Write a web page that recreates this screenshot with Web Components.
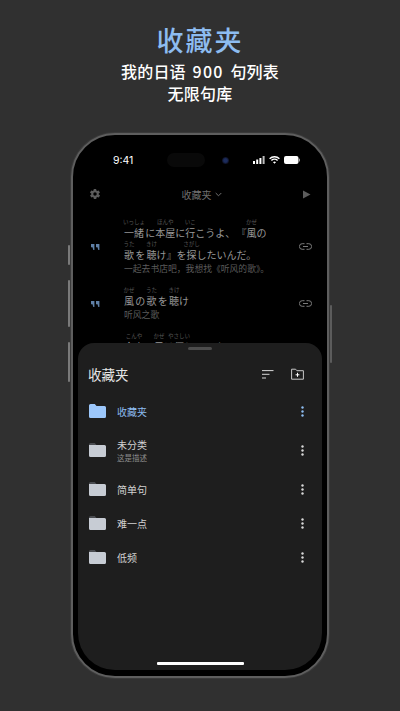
<!doctype html>
<html lang="zh">
  <head>
    <meta charset="UTF-8">
    <title>收藏夹</title>
    <style>
      html, body { margin: 0; height: 711px; overflow: hidden; background: #303030; }
      body { font-family: "Noto Sans CJK SC", "Noto Sans CJK JP", sans-serif; }
    </style>
  </head>
  <body>
    <promo-page>
      <promo-head slot="head"></promo-head>
      <device-frame slot="device">
        <status-bar></status-bar>
        <nav-bar></nav-bar>
        <sentence-list>
          <sentence-row translation="一起去书店吧，我想找《听风的歌》。">
            <jp-word reading="いっしょ">一緒</jp-word> に<jp-word reading="ほんや">本屋</jp-word>に<jp-word reading="いこ">行</jp-word>こうよ、 『<jp-word reading="かぜ">風</jp-word>の<br>
            <jp-word reading="うた">歌</jp-word> を <jp-word reading="きけ">聴</jp-word>け』を<jp-word reading="さがし">探</jp-word>したいんだ。
          </sentence-row>
          <sentence-row translation="听风之歌">
            <jp-word reading="かぜ">風</jp-word> の <jp-word reading="うた">歌</jp-word> を <jp-word reading="きけ">聴</jp-word>け
          </sentence-row>
          <sentence-row translation="今夜的风很温柔">
            <jp-word reading="こんや">今夜</jp-word>、<jp-word reading="かぜ">風</jp-word>は<jp-word reading="やさしい">優</jp-word>しいです
          </sentence-row>
        </sentence-list>
        <folder-sheet>
          <folder-row name="收藏夹" active></folder-row>
          <folder-row name="未分类" note="这是描述"></folder-row>
          <folder-row name="简单句"></folder-row>
          <folder-row name="难一点"></folder-row>
          <folder-row name="低频"></folder-row>
        </folder-sheet>
      </device-frame>
    </promo-page>

    <template id="promo-page-template">
      <style>
        :host { display: flex; flex-direction: column; align-items: center; width: 400px; height: 711px; }
      </style>
      <slot name="head"></slot>
      <slot name="device"></slot>
    </template>

    <template id="promo-head-template">
      <style>
        :host { display: block; width: 400px; height: 133px; box-sizing: border-box; padding-top: 24px; text-align: center; color: #fff; }
        h1 { margin: 0 0 4px; font-size: 27px; line-height: 32px; font-weight: 500; color: #8dbcf0; letter-spacing: 2px; }
        p { margin: 0; font-size: 16px; line-height: 22px; font-weight: 500; letter-spacing: .2px; word-spacing: 3px; }
        b { font: inherit; letter-spacing: 1.200px; }
      </style>
      <h1>收藏夹</h1>
      <p>我的日语 <b>900</b> 句列表</p>
      <p>无限句库</p>
    </template>

    <template id="device-frame-template">
      <style>
        :host { display: block; position: relative; width: 258px; height: 545px; box-sizing: border-box; background: #000; border: 2px solid #5e5e5e; border-radius: 44px; padding: 5px 5px 6px; box-shadow: 0 0 0 1px #3a3a3a; }
        .screen { height: 100%; display: flex; flex-direction: column; overflow: hidden; border-radius: 37px; background: #000; }
        i { position: absolute; width: 2px; background: #7a7a7a; border-radius: 1px; }
        .mute { left: -5px; top: 110px; height: 20px; }
        .up { left: -5px; top: 145px; height: 47px; }
        .down { left: -5px; top: 207px; height: 40px; }
        .power { right: -5px; top: 170px; height: 58px; background: #5c5c5c; }
      </style>
      <i class="mute"></i><i class="up"></i><i class="down"></i><i class="power"></i>
      <div class="screen"><slot></slot></div>
    </template>

    <template id="status-bar-template">
      <style>
        :host { display: flex; align-items: center; height: 40px; flex: none; box-sizing: border-box; padding: 0 22px 0 35px; color: #fff; font: 400 10.500px "Inter", "Liberation Sans", sans-serif; }
        .time { width: 54px; }
        .island { width: 38px; height: 14px; border-radius: 7px; background: #090909; }
        .cam { width: 7px; height: 7px; margin-left: 17px; border-radius: 50%; background: radial-gradient(#1c2c5c 35%, #0c0e1e 70%); }
        .icons { margin-left: auto; display: flex; align-items: center; gap: 4px; }
        svg { display: block; }
      </style>
      <span class="time">9:41</span>
      <span class="island"></span>
      <span class="cam"></span>
      <span class="icons">
        <svg width="12" height="8" viewBox="0 0 12 8" fill="#fff"><rect x="0" y="5" width="2" height="3"/><rect x="3.200" y="3.500" width="2" height="4.500"/><rect x="6.400" y="2" width="2" height="6"/><rect x="9.600" y="0" width="2" height="8" fill="#bbb"/></svg>
        <svg width="11" height="8" viewBox="0 0 11 8" fill="none" stroke="#fff" stroke-width="1.400"><path d="M.6 2.700a7 7 0 0 1 9.800 0"/><path d="M2.400 4.500a4.400 4.400 0 0 1 6.200 0"/><path d="M5.500 7.800 4 6.200a2.200 2.200 0 0 1 3 0z" fill="#fff" stroke="none"/></svg>
        <svg width="16" height="8" viewBox="0 0 16 8" fill="#fff"><rect width="14.500" height="8" rx="2"/><rect x="15" y="2.600" width="1" height="2.800" rx=".5" fill="#999"/></svg>
      </span>
    </template>

    <template id="nav-bar-template">
      <style>
        :host { display: flex; align-items: center; justify-content: space-between; flex: none; height: 28px; padding: 0 11px; color: #6f6f6f; }
        .title { display: flex; align-items: center; gap: 3px; font-size: 10px; }
        svg { display: block; }
      </style>
      <svg width="12" height="12" viewBox="0 0 24 24" fill="#5c5c5c"><path fill-rule="evenodd" d="M19.400 13a7.600 7.600 0 0 0 0-2l2.100-1.600a.5.5 0 0 0 .1-.7l-2-3.400a.5.5 0 0 0-.6-.2l-2.500 1a7.400 7.400 0 0 0-1.700-1l-.4-2.700a.5.5 0 0 0-.5-.4h-4a.5.5 0 0 0-.5.4l-.4 2.700a7.400 7.400 0 0 0-1.700 1l-2.500-1a.5.5 0 0 0-.6.2l-2 3.400a.5.5 0 0 0 .1.7L4.600 11a7.600 7.600 0 0 0 0 2l-2.100 1.600a.5.5 0 0 0-.1.7l2 3.400c.1.2.4.3.6.2l2.500-1c.5.4 1.100.7 1.700 1l.4 2.700c0 .2.2.4.5.4h4c.3 0 .5-.2.5-.4l.4-2.700c.6-.3 1.200-.6 1.700-1l2.500 1c.2.1.5 0 .6-.2l2-3.400a.5.5 0 0 0-.1-.7zM12 15.500a3.500 3.500 0 1 1 0-7 3.500 3.500 0 0 1 0 7z"/></svg>
      <span class="title">收藏夹
        <svg width="7" height="5" viewBox="0 0 7 5" fill="none" stroke="#6f6f6f"><path d="M.7 1 3.500 3.800 6.300 1"/></svg>
      </span>
      <svg width="9" height="9" viewBox="0 0 9 9" fill="#5c5c5c"><path d="M1 .5 8.500 4.500 1 8.500z"/></svg>
    </template>

    <template id="sentence-list-template">
      <style>
        :host { display: flex; flex-direction: column; gap: 15px; flex: 1; min-height: 0; overflow: hidden; padding-top: 14px; }
      </style>
      <slot></slot>
    </template>

    <template id="sentence-row-template">
      <style>
        :host { display: flex; align-items: center; flex: none; padding: 0 10px 0 13px; }
        .mark { flex: none; width: 33px; margin-bottom: 4px; }
        .link { flex: none; margin-bottom: 4px; }
        .body { flex: 1; min-width: 0; }
        .text { font: 10px/22px "Noto Sans CJK JP", sans-serif; color: #989898; white-space: nowrap; word-spacing: -1px; text-spacing-trim: space-all; }
        .tr { margin-top: -4px; font-size: 8.800px; line-height: 13px; color: #5c5c5c; white-space: nowrap; }
        svg { display: block; }
      </style>
      <svg class="mark" height="6" viewBox="0 0 33 6" fill="#5f80a6"><path d="M0 0h3.400v6H2.300L1.500 3.200H0zM5 0h3.400v6H7.300L6.500 3.200H5z"/></svg>
      <div class="body">
        <div class="text"><slot></slot></div>
        <div class="tr"></div>
      </div>
      <svg class="link" width="13" height="7" viewBox="0 0 13 7" fill="none" stroke="#7a7a7a" stroke-width="1"><path d="M5.500.7H3.200a2.800 2.800 0 0 0 0 5.600h2.300M7.500.7h2.300a2.800 2.800 0 0 1 0 5.600H7.500M4 3.500h5"/></svg>
    </template>

    <template id="jp-word-template">
      <style>
        :host { display: inline-block; position: relative; }
        .reading { position: absolute; top: -3px; left: 50%; transform: translateX(-50%); font-size: 5.500px; line-height: 7px; color: #565656; white-space: nowrap; }
      </style>
      <span class="reading"></span><slot></slot>
    </template>

    <template id="folder-sheet-template">
      <style>
        :host { display: block; flex: none; height: 327px; box-sizing: border-box; position: relative; z-index: 1; background: #1e1e1e; border-radius: 16px 16px 0 0; }
        .grip { width: 24px; height: 3px; margin: 0 auto; position: relative; top: 4px; border-radius: 2px; background: #4c4c4c; }
        header { display: flex; align-items: center; height: 48px; padding: 8px 18px 0 10px; box-sizing: border-box; color: #e6e6e6; }
        h2 { margin: 0; flex: 1; font-size: 13.500px; font-weight: 400; }
        header svg { display: block; margin-left: 17px; }
        .home { width: 87px; height: 3px; position: absolute; left: 79px; bottom: 5px; border-radius: 1px; background: #fff; }
      </style>
      <div class="grip"></div>
      <header>
        <h2>收藏夹</h2>
        <svg width="12" height="9" viewBox="0 0 12 9" stroke="#d8d8d8" stroke-width="1"><path d="M0 .6h11.500M0 4.300h7.500M0 8h4"/></svg>
        <svg width="13" height="12" viewBox="0 0 13 12" fill="none" stroke="#c8c8c8"><path d="M.6 1.200h4l1.300 1.500h6.500v8.500H.6z"/><path d="M6.500 4.800v4M4.600 6.800h3.800" stroke="#fff"/></svg>
      </header>
      <slot></slot>
      <div class="home"></div>
    </template>

    <template id="folder-row-template">
      <style>
        :host { display: flex; align-items: center; height: 34px; padding: 0 18px 0 11px; color: #d2d2d2; }
        :host([note]) { height: 44px; }
        :host([note]) .label { padding-top: 2px; }
        svg { display: block; flex: none; }
        .folder { fill: #c7ccd4; }
        .tab { fill: #4a4c50; }
        .label { flex: 1; margin-left: 11px; font-size: 10px; line-height: 13px; }
        small { display: block; font-size: 7.500px; line-height: 13px; color: #8c8c8c; }
        .dots { fill: #d8d8d8; }
        :host([active]) .folder { fill: #9cc7fb; }
        :host([active]) .tab { fill: #9cc7fb; }
        :host([active]) .label { color: #8dbcf0; }
        :host([active]) .dots { fill: #8dbcf0; }
      </style>
      <svg class="folder" width="17" height="14" viewBox="0 0 17 14"><path class="tab" d="M1.500 0h4.300l1.700 2H0v-.5A1.500 1.500 0 0 1 1.500 0z"/><path d="M0 2h15.500A1.500 1.500 0 0 1 17 3.500v9a1.500 1.500 0 0 1-1.500 1.500h-14A1.500 1.500 0 0 1 0 12.500z"/></svg>
      <div class="label"><span class="name"></span><small></small></div>
      <svg class="dots" width="3" height="11" viewBox="0 0 3 11"><circle cx="1.500" cy="1.500" r="1.200"/><circle cx="1.500" cy="5.500" r="1.200"/><circle cx="1.500" cy="9.500" r="1.200"/></svg>
    </template>

    <script>
      // every element here only clones its template into an open shadow root
      class TemplateElement extends HTMLElement {
        constructor() {
          super()
          const template = document.getElementById(this.localName + "-template")
          this.attachShadow({mode: "open"}).append(template.content.cloneNode(true))
        }
      }

      class SentenceRow extends TemplateElement {
        connectedCallback() {
          this.shadowRoot.querySelector(".tr").textContent = this.getAttribute("translation")
        }
      }

      class JpWord extends TemplateElement {
        connectedCallback() {
          this.shadowRoot.querySelector(".reading").textContent = this.getAttribute("reading")
        }
      }

      class FolderRow extends TemplateElement {
        connectedCallback() {
          this.shadowRoot.querySelector(".name").textContent = this.getAttribute("name")
          const note = this.shadowRoot.querySelector("small")
          if (this.hasAttribute("note")) note.textContent = this.getAttribute("note")
          else note.remove()
        }
      }

      ["promo-page", "promo-head", "device-frame", "status-bar", "nav-bar", "sentence-list", "folder-sheet"]
        .forEach(name => customElements.define(name, class extends TemplateElement {}))
      customElements.define("sentence-row", SentenceRow)
      customElements.define("jp-word", JpWord)
      customElements.define("folder-row", FolderRow)
    </script>
  </body>
</html>
